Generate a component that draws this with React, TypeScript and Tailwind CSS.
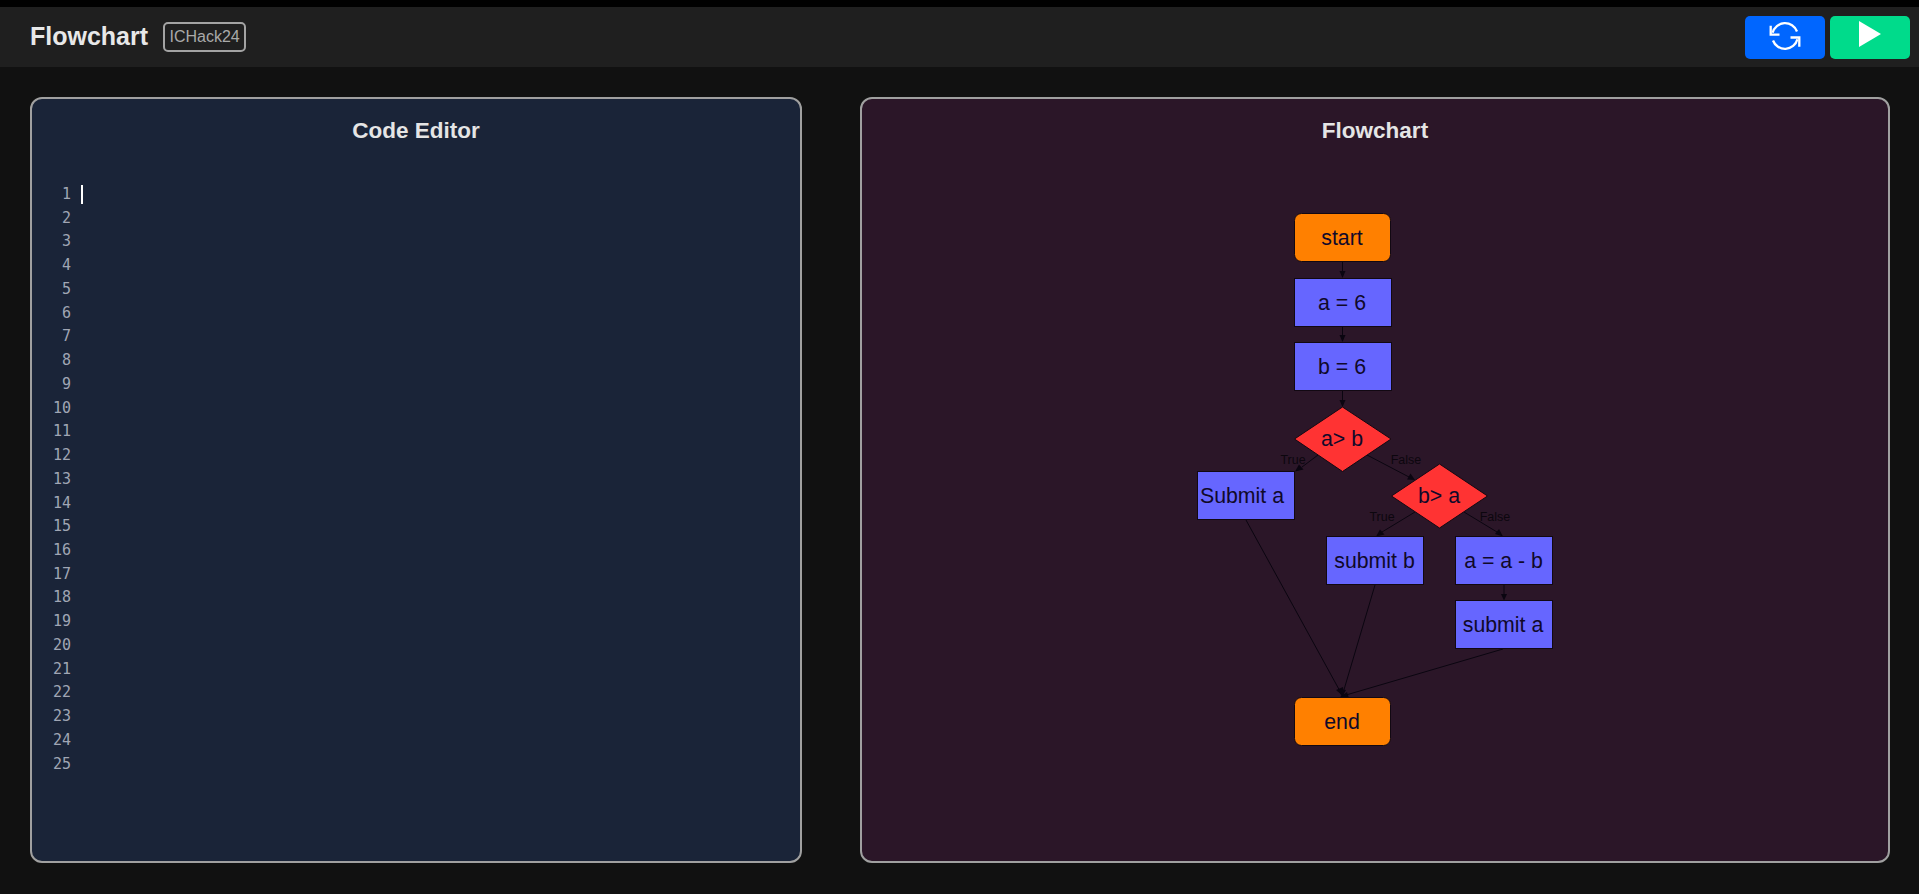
const lineNumbers = Array.from({ length: 25 }, (_, i) => i + 1);

const boxes = [
  { x: 1197.5, y: 471.5, label: "Submit a", tx: 1244, fill: "#6666ff" },
  { x: 1294.5, y: 278.5, label: "a = 6", tx: 1342, fill: "#6666ff" },
  { x: 1294.5, y: 342.5, label: "b = 6", tx: 1342, fill: "#6666ff" },
  { x: 1326.5, y: 536.5, label: "submit b", tx: 1374, fill: "#6666ff" },
  { x: 1455.5, y: 536.5, label: "a = a - b", tx: 1503, fill: "#6666ff" },
  { x: 1455.5, y: 600.5, label: "submit a", tx: 1503, fill: "#6666ff" },
];

const lines = [
  "M1342.5 262V273",
  "M1342.5 327V337",
  "M1342.5 391V402",
  "M1318 455L1302 467",
  "M1367 455L1409 477",
  "M1415 512L1382 532",
  "M1464 512L1497 532",
  "M1504 585V596",
  "M1246 520L1341 693",
  "M1375 585L1343 693",
  "M1503 649L1346 695",
];

const arrows = [
  "M1342.5 278L1339.5 271H1345.5Z",
  "M1342.5 342L1339.5 335H1345.5Z",
  "M1342.5 407L1339.5 400H1345.5Z",
  "M1295 471.5L1299 464.5L1303.5 469.5Z",
  "M1415 480L1407 479.5L1410.5 473.5Z",
  "M1376 536.5L1380 529.5L1384.5 534.5Z",
  "M1503 536.5L1495 534L1499 529Z",
  "M1504 600.5L1501 594H1507Z",
  "M1344 697L1336 690L1343 687Z",
  "M1342 697L1338 689L1346 690Z",
  "M1340 697L1347 692L1349 698Z",
];

const edgeLabels = [
  { x: 1293, y: 464, t: "True" },
  { x: 1406, y: 464, t: "False" },
  { x: 1382, y: 521, t: "True" },
  { x: 1495, y: 521, t: "False" },
];

function SyncIcon() {
  return (
    <svg width="32" height="32" viewBox="-16 -16 32 32" fill="none" stroke="white" strokeWidth="2.3" className="mb-[3px]">
      <path d="M-14.3 -10.3V-1.3H-5.5" />
      <path d="M-12.4 -3.2A12.8 12.8 0 0 1 12 -4.5" />
      <path d="M14.3 10.7V1.5H5.5" />
      <path d="M12.4 3.2A12.8 12.8 0 0 1 -12 4.5" />
    </svg>
  );
}

function Chart() {
  return (
    <svg viewBox="1100 190 500 580" width="500" height="580" className="absolute left-[238px] top-[91px]">
      <g stroke="#0a0510" strokeWidth="1" fill="none">
        {lines.map((d) => <path key={d} d={d} />)}
      </g>
      <g fill="#0a0510">
        {arrows.map((d) => <path key={d} d={d} />)}
      </g>
      <g fontFamily="'Liberation Sans', Arial, sans-serif" fontSize="12.5" fill="#0c060e" textAnchor="middle">
        {edgeLabels.map((l) => <text key={l.x} x={l.x} y={l.y}>{l.t}</text>)}
      </g>
      <g stroke="#120812" strokeWidth="1">
        <rect x="1294.5" y="213.5" width="96" height="48" rx="7" fill="#ff8000" />
        <rect x="1294.5" y="697.5" width="96" height="48" rx="7" fill="#ff8000" />
        {boxes.map((b) => <rect key={b.label} x={b.x} y={b.y} width="97" height="48" fill={b.fill} />)}
        <path d="M1342.5 407L1391 439L1342.5 471.5L1294.5 439Z" fill="#ff3333" />
        <path d="M1439.5 464L1487.5 496L1439.5 528L1391.5 496Z" fill="#ff3333" />
      </g>
      <g fontFamily="'Liberation Sans', Arial, sans-serif" fontSize="21.3" fill="#10092a" textAnchor="middle">
        <text x="1342" y="245">start</text>
        <text x="1342" y="309.5">a = 6</text>
        <text x="1342" y="373.5">b = 6</text>
        <text x="1342" y="446">a&gt; b</text>
        <text x="1242" y="503">Submit a</text>
        <text x="1439" y="503">b&gt; a</text>
        <text x="1374.5" y="567.5">submit b</text>
        <text x="1503.5" y="567.5">a = a - b</text>
        <text x="1503" y="631.5">submit a</text>
        <text x="1342" y="729">end</text>
      </g>
    </svg>
  );
}

export default function App() {
  return (
    <div className="h-[894px] overflow-hidden bg-[#111111] border-t-[7px] border-black font-['Liberation_Sans',Arial,sans-serif]">
      <header className="h-[60px] bg-[#1f1f1f] flex items-center justify-between pl-[30px] pr-[9px]">
        <div className="flex items-center gap-[15px]">
          <h1 className="text-[25px] font-bold text-[#e8e8e8]">Flowchart</h1>
          <span className="h-[30px] w-[83px] flex items-center justify-center border-2 border-[#a3a3a3] rounded-[5px] text-[16px] text-[#a9a9a9]">ICHack24</span>
        </div>
        <div className="flex gap-[5px]">
          <button className="w-[80px] h-[43px] rounded-[5px] bg-[#0066ff] flex items-center justify-center">
            <SyncIcon />
          </button>
          <button className="w-[80px] h-[43px] rounded-[5px] bg-[#00db8b] flex items-center justify-center">
            <svg width="22" height="26" viewBox="0 0 22 26" className="mb-[6px]">
              <path d="M0 0L22 13L0 26Z" fill="white" />
            </svg>
          </button>
        </div>
      </header>
      <main className="flex gap-[58px] pl-[30px] pt-[30px]">
        <section className="w-[772px] h-[766px] bg-[#1a2438] border-2 border-[#a0a0a0] rounded-[12px]">
          <h2 className="text-center text-[22.5px] font-bold text-[#e5e5e5] mt-[19px] leading-[26px]">Code Editor</h2>
          <div className="flex mt-[39px]">
            <div className="w-[39px] text-right font-['DejaVu_Sans_Mono',monospace] text-[15px] leading-[23.73px] text-[#a0a6b4]">
              {lineNumbers.map((n) => <div key={n}>{n}</div>)}
            </div>
            <div className="w-[2px] h-[19px] bg-white ml-[10px] mt-[2px]" />
          </div>
        </section>
        <section className="relative w-[1030px] h-[766px] bg-[#2b1628] border-2 border-[#a0a0a0] rounded-[12px]">
          <h2 className="text-center text-[22.5px] font-bold text-[#e5e5e5] mt-[19px] leading-[26px]">Flowchart</h2>
          <Chart />
        </section>
      </main>
    </div>
  );
}
